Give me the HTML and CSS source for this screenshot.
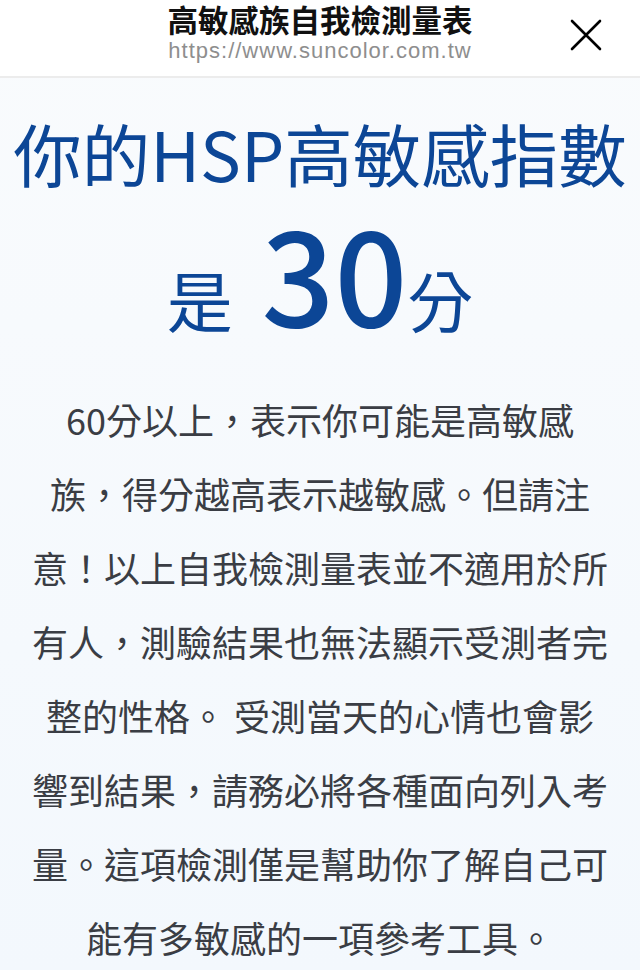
FILE: index.html
```html
<!DOCTYPE html>
<html lang="zh-Hant">
<head>
    <meta charset="UTF-8">
    <meta name="viewport" content="width=device-width, initial-scale=1.0">
    <title>高敏感族自我檢測量表</title>
    <link rel="stylesheet" href="styles.css">
</head>
<body>
    <div class="topbar">
        <div class="topbar-text">
            <div class="page-title">高敏感族自我檢測量表</div>
            <div class="page-url">https://www.suncolor.com.tw</div>
        </div>
        <button class="close-btn" aria-label="關閉">
            <svg width="34" height="34" viewBox="0 0 34 34">
                <path d="M3 3 L31 31 M31 3 L3 31" stroke="#000" stroke-width="2.6" stroke-linecap="round" fill="none"/>
            </svg>
        </button>
    </div>

    <div class="result">
        <h1 class="result-title">你的HSP高敏感指數</h1>
        <div class="score-line">是<span class="score"> 30</span>分</div>
        <p class="result-note">60分以上，表示你可能是高敏感族，得分越高表示越敏感。但請注意！以上自我檢測量表並不適用於所有人，測驗結果也無法顯示受測者完整的性格。 受測當天的心情也會影響到結果，請務必將各種面向列入考量。這項檢測僅是幫助你了解自己可能有多敏感的一項參考工具。</p>
    </div>
</body>
</html>
```

FILE: styles.css
```css
body {
    margin: 0;
    font-family: "Noto Sans CJK TC", "Noto Sans", sans-serif;
    background: linear-gradient(180deg, #f9fbfd 0%, #f3f8fd 100%);
    min-height: 970px;
}
.topbar {
    height: 76px;
    background: #fff;
    border-bottom: 2px solid #ececec;
    display: flex;
    justify-content: center;
    align-items: center;
    position: relative;
}
.topbar-text {
    text-align: center;
    margin-top: -10px;
}
.page-title {
    font-size: 30.5px;
    font-weight: 700;
    color: #111;
    line-height: 36px;
}
.page-url {
    font-family: "Liberation Sans", Arial, sans-serif;
    font-size: 22px;
    letter-spacing: 1px;
    color: #8e8e8e;
    line-height: 28px;
}
.close-btn {
    position: absolute;
    right: 37px;
    top: 18px;
    background: none;
    border: none;
    padding: 0;
    cursor: pointer;
}
.result {
    text-align: center;
    padding-top: 27px;
}
.result-title {
    margin: 0;
    font-size: 68.5px;
    font-weight: 400;
    color: #0c4696;
    line-height: 96px;
    white-space: nowrap;
}
.score-line {
    font-size: 66px;
    color: #0c4696;
    line-height: 130px;
    margin-top: 6px;
}
.score {
    font-size: 128px;
    font-weight: 500;
}
.result-note {
    width: 578px;
    margin: 19px auto 0;
    font-size: 36px;
    line-height: 74px;
    color: #3a3d44;
}
```
